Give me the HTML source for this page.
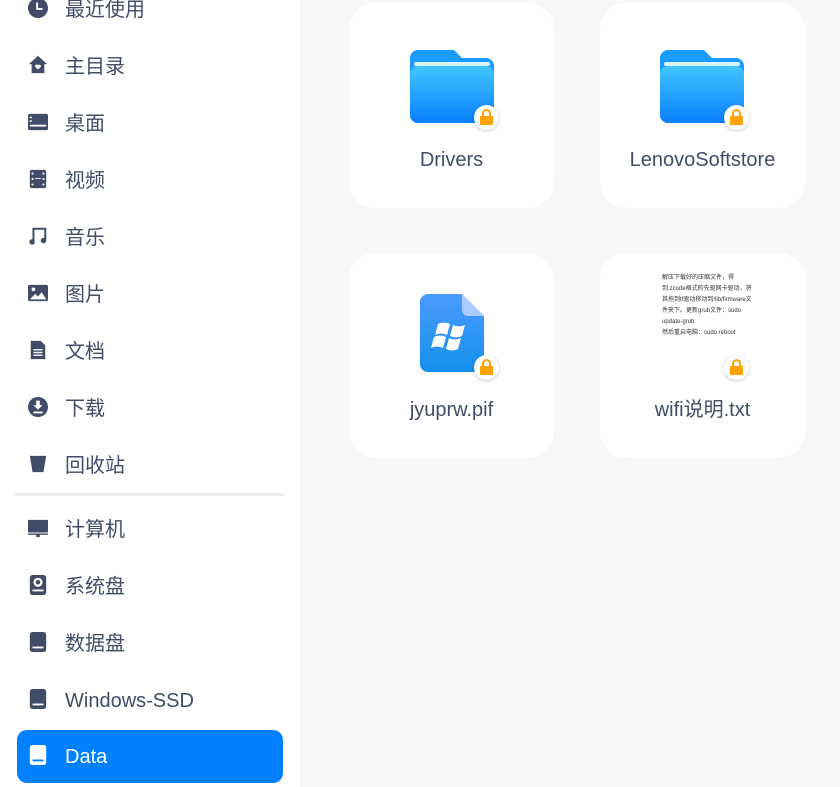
<!DOCTYPE html>
<html><head><meta charset="utf-8"><style>
*{margin:0;padding:0;box-sizing:border-box}
body{width:840px;height:787px;overflow:hidden;background:#f7f7f7;font-family:"Liberation Sans","Noto Sans CJK SC",sans-serif;position:relative}
.side{position:absolute;left:0;top:0;width:300px;height:787px;background:#fff}
.it{position:absolute;left:17px;width:266px;height:53px;color:#414d68;font-size:20px}
.it span{position:absolute;left:48px;top:15px;white-space:nowrap;line-height:24px}
.it svg{position:absolute;left:11px;top:15px;width:20px;height:20px}
.sel{background:#0081ff;border-radius:10px;color:#fff}
.sep{position:absolute;left:15px;top:493px;width:269px;height:3px;background:#eee}
.card{position:absolute;width:205px;height:205px;background:#fff;border-radius:26px}
.name{position:absolute;left:0;right:0;top:145px;line-height:24px;height:24px;text-align:center;font-size:20px;color:#414d68;white-space:nowrap}
.lock{position:absolute;width:25px;height:25px;border-radius:50%;background:#fff;box-shadow:0 1px 3px rgba(0,0,0,.2)}
.lock:before{content:"";position:absolute;left:6px;top:11px;width:13px;height:9px;background:#ffa200;border-radius:1px}
.lock:after{content:"";position:absolute;left:8px;top:4px;width:5px;height:8px;border:2px solid #ffa200;border-bottom:none;border-radius:5px 5px 0 0}
.txt{position:absolute;left:62px;top:20px;font-size:6px;line-height:11px;color:#333;width:90px}
</style></head><body>
<div class="side">
<div class="it" style="top:-17px"><svg viewBox="0 0 22 22"><circle cx="11" cy="11" r="11" fill="#414d68"/><path d="M10 5v7h6" stroke="#fff" stroke-width="2" fill="none"/></svg><span>最近使用</span></div>
<div class="it" style="top:40px"><svg viewBox="0 0 22 22"><path d="M11 1L1 10h3v10h14V10h3z" fill="#414d68"/><path d="M11 16l-3-3a1.6 1.6 0 0 1 3-1.5a1.6 1.6 0 0 1 3 1.5z" fill="#fff"/></svg><span>主目录</span></div>
<div class="it" style="top:97px"><svg viewBox="0 0 22 22"><rect x="0" y="2" width="22" height="18" rx="2" fill="#414d68"/><rect x="2" y="14" width="18" height="2" fill="#fff"/><rect x="2" y="5" width="2" height="2" fill="#fff"/><rect x="2" y="9" width="2" height="2" fill="#fff"/></svg><span>桌面</span></div>
<div class="it" style="top:154px"><svg viewBox="0 0 22 22"><rect x="2" y="1" width="18" height="20" rx="2" fill="#414d68"/><g fill="#fff"><rect x="4" y="4" width="2" height="2"/><rect x="4" y="10" width="2" height="2"/><rect x="4" y="16" width="2" height="2"/><rect x="16" y="4" width="2" height="2"/><rect x="16" y="10" width="2" height="2"/><rect x="16" y="16" width="2" height="2"/><rect x="8" y="10" width="6" height="1"/></g></svg><span>视频</span></div>
<div class="it" style="top:211px"><svg viewBox="0 0 22 22"><path d="M6 17V3h13v13" stroke="#414d68" stroke-width="2.2" fill="none"/><circle cx="4.5" cy="17.5" r="3" fill="#414d68"/><circle cx="17" cy="16" r="3" fill="#414d68"/></svg><span>音乐</span></div>
<div class="it" style="top:268px"><svg viewBox="0 0 22 22"><rect x="0" y="2" width="22" height="18" rx="2" fill="#414d68"/><circle cx="6" cy="7" r="2" fill="#fff"/><path d="M2 18l6-6 3 3 4-5 5 8z" fill="#fff"/></svg><span>图片</span></div>
<div class="it" style="top:325px"><svg viewBox="0 0 22 22"><path d="M3 1h11l5 5v15H3z" fill="#414d68"/><g fill="#fff"><rect x="6" y="10" width="10" height="1.5"/><rect x="6" y="13" width="10" height="1.5"/><rect x="6" y="16" width="10" height="1.5"/></g></svg><span>文档</span></div>
<div class="it" style="top:382px"><svg viewBox="0 0 22 22"><circle cx="11" cy="11" r="11" fill="#414d68"/><path d="M9 4h4v5h3l-5 5-5-5h3z M6 16h10v2H6z" fill="#fff"/></svg><span>下载</span></div>
<div class="it" style="top:439px"><svg viewBox="0 0 22 22"><path d="M2 2h18l-3 18H5z" fill="#414d68"/></svg><span>回收站</span></div>
<div class="sep"></div>
<div class="it" style="top:503px"><svg viewBox="0 0 22 22"><rect x="0" y="2" width="22" height="14" rx="1" fill="#414d68"/><rect x="0" y="17" width="22" height="1.5" fill="#414d68"/><rect x="9" y="18" width="4" height="3" fill="#414d68"/></svg><span>计算机</span></div>
<div class="it" style="top:560px"><svg viewBox="0 0 22 22"><rect x="2" y="0" width="18" height="22" rx="3" fill="#414d68"/><circle cx="11" cy="8" r="5" fill="#fff"/><circle cx="11" cy="8" r="2.5" fill="#414d68"/><rect x="5" y="16" width="12" height="2" fill="#fff"/></svg><span>系统盘</span></div>
<div class="it" style="top:617px"><svg viewBox="0 0 22 22"><rect x="2" y="0" width="18" height="22" rx="3" fill="#414d68"/><rect x="5" y="16" width="12" height="2" fill="#fff"/></svg><span>数据盘</span></div>
<div class="it" style="top:674px"><svg viewBox="0 0 22 22"><rect x="2" y="0" width="18" height="22" rx="3" fill="#414d68"/><rect x="5" y="16" width="12" height="2" fill="#fff"/></svg><span>Windows-SSD</span></div>
<div class="it sel" style="top:730px"><svg viewBox="0 0 22 22"><rect x="2" y="0" width="18" height="22" rx="3" fill="#fff"/><rect x="5" y="16" width="12" height="2" fill="#0081ff"/></svg><span>Data</span></div>
</div>

<div class="card" style="left:349px;top:3px">
<svg style="position:absolute;left:61px;top:47px" width="84" height="73" viewBox="0 0 84 73"><defs><linearGradient id="f" x1="0" y1="0" x2="0" y2="1"><stop offset="0" stop-color="#3fc6ff"/><stop offset="1" stop-color="#0a7fff"/></linearGradient></defs><path d="M0 8a8 8 0 0 1 8-8h36l8 8h24a8 8 0 0 1 8 8v49a8 8 0 0 1-8 8H8a8 8 0 0 1-8-8z" fill="#1a9bff"/><rect x="4" y="12" width="76" height="4" rx="2" fill="#d8f2ff"/><rect x="0" y="16" width="84" height="57" rx="8" fill="url(#f)"/></svg>
<div class="lock" style="left:125px;top:102px"></div>
<div class="name">Drivers</div></div>
<div class="card" style="left:600px;top:3px">
<svg style="position:absolute;left:60px;top:47px" width="84" height="73" viewBox="0 0 84 73"><path d="M0 8a8 8 0 0 1 8-8h36l8 8h24a8 8 0 0 1 8 8v49a8 8 0 0 1-8 8H8a8 8 0 0 1-8-8z" fill="#1a9bff"/><rect x="4" y="12" width="76" height="4" rx="2" fill="#d8f2ff"/><rect x="0" y="16" width="84" height="57" rx="8" fill="url(#f)"/></svg>
<div class="lock" style="left:124px;top:102px"></div>
<div class="name">LenovoSoftstore</div></div>
<div class="card" style="left:349px;top:253px">
<svg style="position:absolute;left:71px;top:41px" width="64" height="78" viewBox="0 0 64 78"><defs><linearGradient id="g" x1="0" y1="0" x2="0" y2="1"><stop offset="0" stop-color="#4b9bff"/><stop offset="1" stop-color="#1490ec"/></linearGradient></defs><path d="M8 0h34l22 22v48a8 8 0 0 1-8 8H8a8 8 0 0 1-8-8V8a8 8 0 0 1 8-8z" fill="url(#g)"/><path d="M42 0l22 22H48a6 6 0 0 1-6-6z" fill="#a9ccff"/><path d="M18 30q6-3 12 0l-3 11q-6-3-12 0z M33 31q6 3 12 0l-3 11q-6 3-12 0z M14 43q6-3 12 0l-3 11q-6-3-12 0z M29 44q6 3 12 0l-3 11q-6 3-12 0z" fill="#fff"/></svg>
<div class="lock" style="left:125px;top:102px"></div>
<div class="name">jyuprw.pif</div></div>
<div class="card" style="left:600px;top:253px">
<div class="txt">解压下载好的压缩文件，得到.zcode格式的先驱网卡驱动，将其拖到tf驱动移动到/lib/firmware文件夹下。更新grub文件：sudo update-grub<br>然后重启电脑：sudo reboot</div>
<div class="lock" style="left:124px;top:102px"></div>
<div class="name">wifi说明.txt</div></div>
</body></html>
